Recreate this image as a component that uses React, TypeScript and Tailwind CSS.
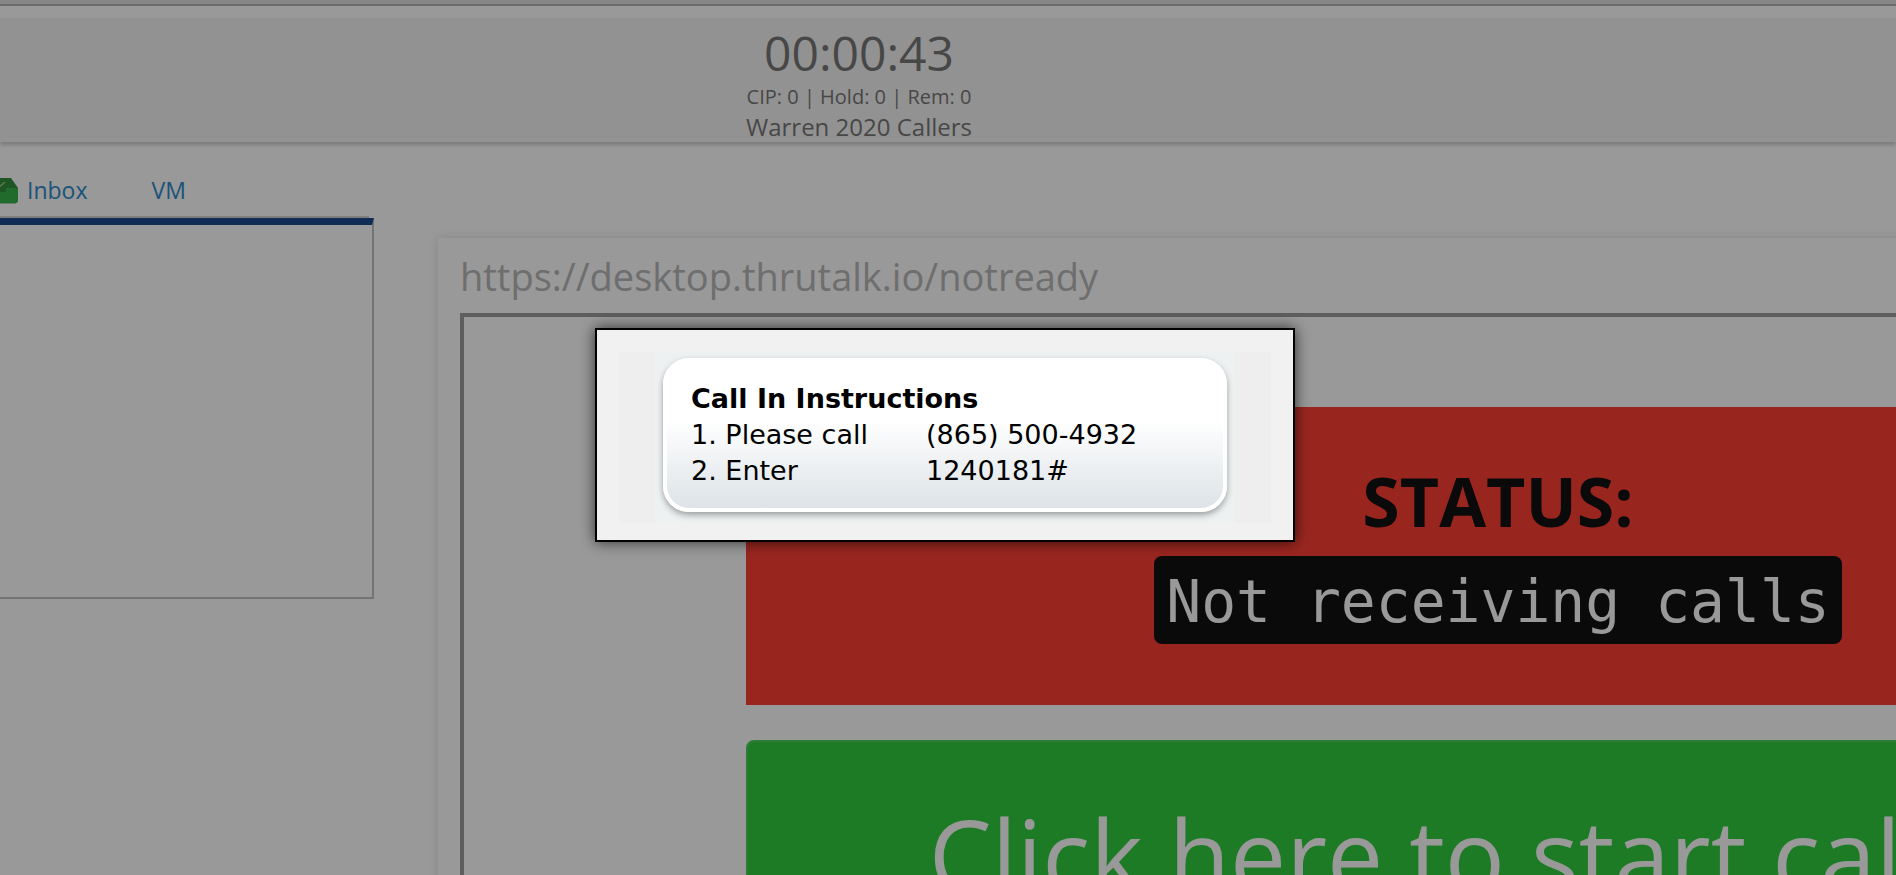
import { ReactNode } from "react";

const steps = [
  { label: "1. Please call", value: "(865) 500-4932" },
  { label: "2. Enter", value: "1240181#" },
];

function InboxIcon() {
  return (
    <svg width="27" height="28" viewBox="0 -2 27 28" aria-hidden="true" className="shrink-0">
      <path d="M7 0H20L27 10V14H0V10Z" fill="#348c3c" />
      <path d="M0 10H8V14H15V10H27V23Q27 25 25 25H2Q0 25 0 23Z" fill="#37b54a" />
      <path d="M5 6L8 9L14 4" fill="none" stroke="#8fd070" strokeWidth="1.5" />
      <path d="M2 25.5H25" stroke="#a9cfae" strokeWidth="1" />
    </svg>
  );
}

function Header() {
  return (
    <header>
      <div className="h-1 bg-[#dfdfdf]" />
      <div className="h-0.5 bg-[#b2b2b2]" />
      <div className="h-3 bg-white" />
      <div className="relative h-[124px] bg-[#f4f4f4] pr-[178px] text-center text-[#777] shadow-[0_3px_4px_rgba(0,0,0,0.2)]">
        <div className="pt-[5px] text-[48px] leading-[60px]">00:00:43</div>
        <div className="text-[20px] leading-[27px]">CIP: 0 | Hold: 0 | Rem: 0</div>
        <div className="text-[24px] leading-[34px]">Warren 2020 Callers</div>
      </div>
    </header>
  );
}

function Sidebar() {
  return (
    <aside className="mr-16 w-[374px] shrink-0">
      <nav className="flex h-[74px] items-center pt-[22px] text-[23px] leading-8 text-[#2d8aca]">
        <a href="#inbox" className="-ml-[9px] flex items-center gap-[9px]">
          <InboxIcon />
          Inbox
        </a>
        <a href="#vm" className="ml-16">
          VM
        </a>
      </nav>
      <div className="mr-[5px] h-0.5 bg-[#d2d2d2]" />
      <div className="h-[381px] border-r-2 border-b-2 border-t-[7px] border-r-[#c2c2c2] border-b-[#c2c2c2] border-t-[#1b4b8e]" />
    </aside>
  );
}

function Browser({ url, children }: { url: string; children: ReactNode }) {
  return (
    <main className="-mr-[662px] mt-24 flex-1 bg-white px-[22px] shadow-[0_0_10px_rgba(0,0,0,0.12)]">
      <div className="h-[75px] pt-3 text-[38px] leading-[52px] text-[#b7b7b7]">{url}</div>
      <div className="border-4 border-[#9d9d9d] px-[282px] pt-[90px]">{children}</div>
    </main>
  );
}

function CallInDialog() {
  return (
    <div className="fixed inset-0 flex items-center justify-center bg-black/40 pr-1.5 pb-1.5">
      <div
        role="dialog"
        aria-labelledby="call-in-title"
        className="w-[700px] border-2 border-black bg-[#f1f1f1] px-[22px] pt-[22px] pb-[17px] shadow-[0_0_14px_rgba(0,0,0,0.7)]"
      >
        <div className="bg-[#eeeeee] px-9">
          <div className="bg-[#eef1f2] px-2 pt-1.5 pb-[11px]">
            <div className="rounded-[26px] border-4 border-white bg-linear-to-b from-white from-40% to-[#dde3e7] py-[19px] pl-6 font-['Verdana','DejaVu_Sans',sans-serif] text-[27px] leading-9 text-black shadow-[0_3px_6px_rgba(0,0,0,0.35)]">
              <h2 id="call-in-title" className="font-bold">
                Call In Instructions
              </h2>
              {steps.map((step) => (
                <div key={step.label} className="flex">
                  <span className="w-[235px]">{step.label}</span>
                  <span>{step.value}</span>
                </div>
              ))}
            </div>
          </div>
        </div>
      </div>
    </div>
  );
}

export default function App() {
  return (
    <div className="h-screen overflow-hidden bg-white font-['Open_Sans',sans-serif]">
      <Header />
      <div className="flex">
        <Sidebar />
        <Browser url="https://desktop.thrutalk.io/notready">
          <section className="h-[298px] bg-[#ff3f35] pt-[46px] text-center">
            <h1 className="text-[68px] leading-[96px] font-bold text-[#111]">STATUS:</h1>
            <div className="mt-[7px] inline-block rounded-lg bg-[#111] px-3 pt-1 font-['DejaVu_Sans_Mono',monospace] text-[58px] leading-[84px] text-white">
              Not receiving calls
            </div>
          </section>
          <button
            type="button"
            className="mt-[35px] w-full rounded-lg border-2 border-[#48cf5d] bg-[#32cd3f] py-[46px] text-[100px] leading-[132px] text-white"
          >
            Click here to start calling
          </button>
        </Browser>
      </div>
      <CallInDialog />
    </div>
  );
}
